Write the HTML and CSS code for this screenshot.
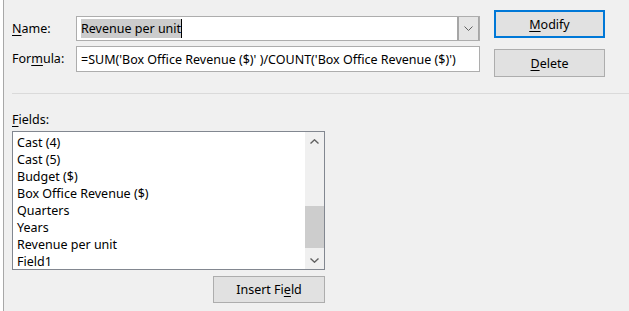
FILE: index.html
```html
<!DOCTYPE html>
<html>
<head>
  <title>Calculated Field</title>
  <meta charset="utf-8">
  <link rel="stylesheet" href="styles.css">
</head>
<body>
  <div class="sheet-edge"></div>
  <div class="dialog">
    <div class="top">
      <div class="form">
        <div class="row">
          <label class="label"><u>N</u>ame:</label>
          <div class="combo">
            <div class="combo-text"><span class="selected">Revenue per unit</span><span class="caret"></span></div>
            <div class="combo-btn">
              <svg width="9" height="5" viewBox="0 0 9 5"><path d="M0.5 0.5 L4.5 4.5 L8.5 0.5" fill="none" stroke="#606060" stroke-width="1"/></svg>
            </div>
          </div>
        </div>
        <div class="row">
          <label class="label">For<u>m</u>ula:</label>
          <div class="textbox">=SUM('Box Office Revenue ($)' )/COUNT('Box Office Revenue ($)')</div>
        </div>
      </div>
      <div class="side-buttons">
        <button class="btn btn-default"><u>M</u>odify</button>
        <button class="btn btn-delete"><u>D</u>elete</button>
      </div>
    </div>

    <div class="separator"></div>

    <div class="fields">
      <label class="label fields-label"><u>F</u>ields:</label>
      <div class="listbox">
        <ul class="items">
          <li>Cast (4)</li>
          <li>Cast (5)</li>
          <li>Budget ($)</li>
          <li>Box Office Revenue ($)</li>
          <li>Quarters</li>
          <li>Years</li>
          <li>Revenue per unit</li>
          <li>Field1</li>
        </ul>
        <div class="scrollbar">
          <div class="arrow">
            <svg width="9" height="5" viewBox="0 0 9 5"><path d="M0.5 4.5 L4.5 0.8 L8.5 4.5" fill="none" stroke="#606060" stroke-width="1.4"/></svg>
          </div>
          <div class="track"><div class="thumb"></div></div>
          <div class="arrow">
            <svg width="9" height="5" viewBox="0 0 9 5"><path d="M0.5 0.5 L4.5 4.2 L8.5 0.5" fill="none" stroke="#606060" stroke-width="1.4"/></svg>
          </div>
        </div>
      </div>
      <div class="insert-row">
        <button class="btn btn-insert">Insert Fi<u>e</u>ld</button>
      </div>
    </div>
  </div>
</body>
</html>
```

FILE: styles.css
```css
* {
  margin: 0;
  padding: 0;
  box-sizing: border-box;
}

body {
  width: 629px;
  height: 311px;
  overflow: hidden;
  display: flex;
  background: #f0f0f0;
  font-family: "Noto Sans", "Open Sans", sans-serif;
  font-size: 12.5px;
  color: #000;
}

.sheet-edge {
  width: 4px;
  background: #fff;
  border-right: 1px solid #a8a8a8;
  flex-shrink: 0;
}

.dialog {
  flex: 1;
  padding-left: 8px;
}

u {
  text-decoration: underline;
  text-underline-offset: 2px;
}

/* top part: name + formula */
.top {
  display: flex;
}

.form {
  padding-top: 16px;
  display: flex;
  flex-direction: column;
  gap: 5px;
}

.row {
  display: flex;
  align-items: center;
}

.label {
  width: 64px;
  line-height: 16px;
}

.combo {
  width: 404px;
  height: 25px;
  background: #fff;
  border: 1px solid #adadad;
  display: flex;
}

.combo-text {
  flex: 1;
  display: flex;
  align-items: center;
  padding-left: 4px;
}

.selected {
  background: #cccccc;
  line-height: 19px;
}

.caret {
  width: 1px;
  height: 19px;
  background: #000;
}

.combo-btn {
  width: 22px;
  background: #e5e5e5;
  border-left: 2px solid #a6a6a6;
  border-right: 1px solid #a6a6a6;
  display: flex;
  align-items: center;
  justify-content: center;
}

.textbox {
  width: 404px;
  height: 26px;
  background: #fff;
  border: 1px solid #adadad;
  padding-left: 4px;
  display: flex;
  align-items: center;
  white-space: nowrap;
}

.side-buttons {
  margin-left: 14px;
  padding-top: 10px;
  display: flex;
  flex-direction: column;
  gap: 11px;
}

.btn {
  font-family: inherit;
  font-size: 12.5px;
  color: #000;
  background: #e1e1e1;
  border: 1px solid #adadad;
  display: flex;
  align-items: center;
  justify-content: center;
}

.btn-default {
  width: 111px;
  height: 28px;
  border: 2px solid #0078d7;
}

.btn-delete {
  width: 111px;
  height: 28px;
}

.separator {
  height: 1px;
  background: #dadada;
  margin-top: 16px;
}

/* fields list */
.fields {
  width: 313px;
}

.fields-label {
  display: block;
  margin-top: 18px;
}

.listbox {
  margin-top: 3px;
  height: 139px;
  background: #fff;
  border: 1px solid #828790;
  display: flex;
}

.items {
  flex: 1;
  list-style: none;
  padding: 2px 0 0 4px;
}

.items li {
  height: 17px;
  line-height: 17px;
  white-space: nowrap;
}

.scrollbar {
  width: 19px;
  background: #f0f0f0;
  display: flex;
  flex-direction: column;
}

.arrow {
  height: 18px;
  display: flex;
  align-items: center;
  justify-content: center;
}

.track {
  flex: 1;
}

.thumb {
  height: 42px;
  margin-top: 56px;
  background: #cdcdcd;
}

.insert-row {
  display: flex;
  justify-content: flex-end;
  margin-top: 6px;
}

.btn-insert {
  width: 112px;
  height: 27px;
}
```
